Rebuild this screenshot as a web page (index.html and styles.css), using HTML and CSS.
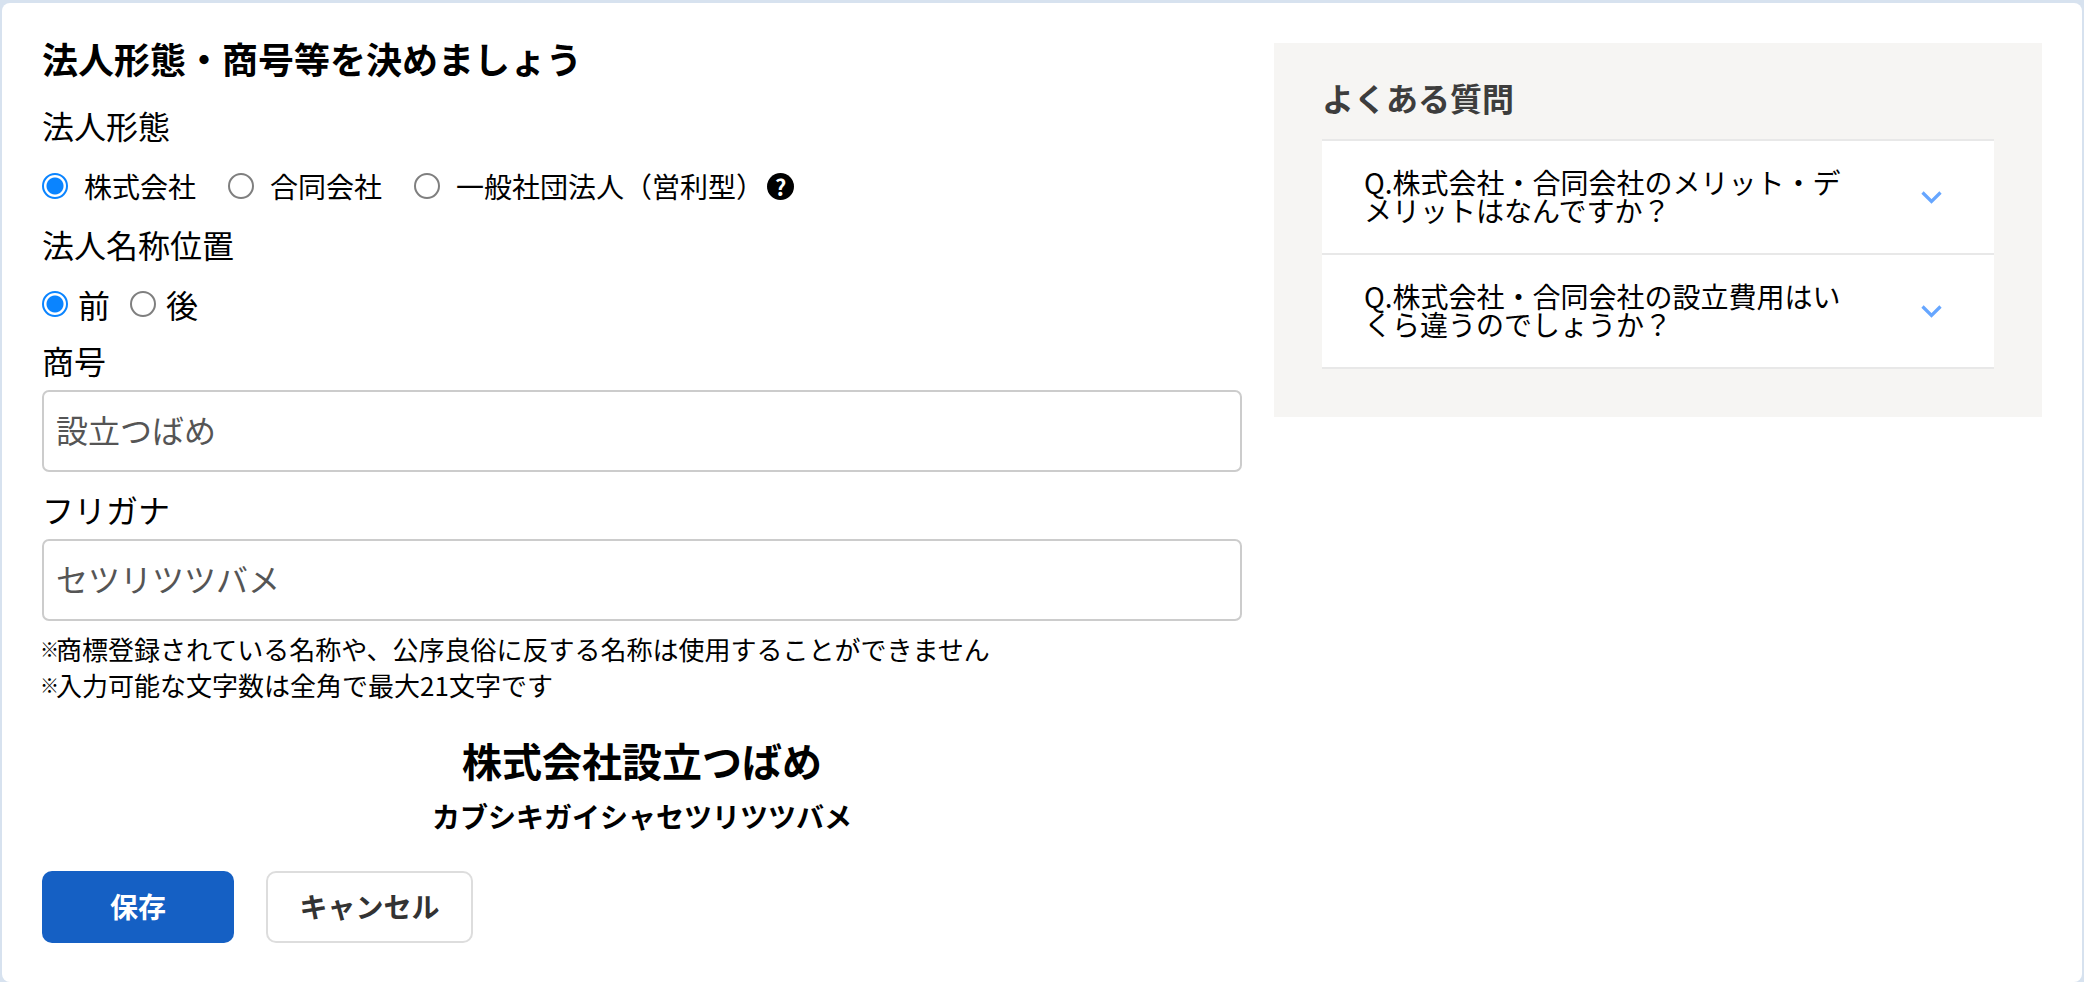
FILE: index.html
```html
<!DOCTYPE html>
<html lang="ja">
<head>
<meta charset="utf-8">
<title>法人形態・商号等を決めましょう</title>
<link rel="stylesheet" href="styles.css">
</head>
<body>
<main class="card">
  <form class="form">
    <h1 class="title">法人形態・商号等を決めましょう</h1>
    <p class="label label-type">法人形態</p>
    <div class="radios radios-type">
      <label class="radio"><input type="radio" name="type" checked><span>株式会社</span></label>
      <label class="radio"><input type="radio" name="type"><span>合同会社</span></label>
      <label class="radio"><input type="radio" name="type"><span>一般社団法人（営利型）</span></label>
      <span class="help">?</span>
    </div>
    <p class="label label-pos">法人名称位置</p>
    <div class="radios radios-pos">
      <label class="radio"><input type="radio" name="pos" checked><span>前</span></label>
      <label class="radio"><input type="radio" name="pos"><span>後</span></label>
    </div>
    <p class="label label-name">商号</p>
    <input class="field" type="text" value="設立つばめ">
    <p class="label label-kana">フリガナ</p>
    <input class="field" type="text" value="セツリツツバメ">
    <p class="note note-first"><span class="mark">※</span>商標登録されている名称や、公序良俗に反する名称は使用することができません</p>
    <p class="note"><span class="mark">※</span>入力可能な文字数は全角で最大21文字です</p>
    <p class="result">株式会社設立つばめ</p>
    <p class="result-kana">カブシキガイシャセツリツツバメ</p>
    <div class="actions">
      <button class="btn btn-save" type="button">保存</button>
      <button class="btn btn-cancel" type="button">キャンセル</button>
    </div>
  </form>
  <aside class="faq">
    <h2 class="faq-title">よくある質問</h2>
    <ul class="faq-list">
      <li class="faq-item">
        <span class="faq-q">Q.株式会社・合同会社のメリット・デメリットはなんですか？</span>
        <svg class="chev" viewBox="0 0 21 13" aria-hidden="true"><path d="M1.5 1.5 10.5 10.5 19.5 1.5"/></svg>
      </li>
      <li class="faq-item">
        <span class="faq-q">Q.株式会社・合同会社の設立費用はいくら違うのでしょうか？</span>
        <svg class="chev" viewBox="0 0 21 13" aria-hidden="true"><path d="M1.5 1.5 10.5 10.5 19.5 1.5"/></svg>
      </li>
    </ul>
  </aside>
</main>
</body>
</html>
```
FILE: styles.css
```css
* { box-sizing: border-box; }
html, body { margin: 0; height: 100%; }
body {
  background: #d7e2ef;
  padding: 3px 2px 0;
  font-family: "Noto Sans CJK JP", "Liberation Sans", sans-serif;
  color: #000;
  overflow: hidden;
}
.card {
  background: #fff;
  border-radius: 8px;
  height: 979px;
  padding: 40px 40px 0;
  display: flex;
  align-items: flex-start;
  gap: 32px;
}
.form { width: 1200px; flex: none; margin-top: -3px; }
p, h1, h2, ul { margin: 0; padding: 0; }
.title { font-size: 36px; line-height: 36px; font-weight: 700; }
.label { font-size: 32px; line-height: 40px; }
.label-type { margin-top: 29px; }
.label-pos { margin-top: 18px; }
.label-name { margin-top: 16px; }
.label-kana { margin-top: 17px; }
.radios { display: flex; align-items: center; }
.radios-type { margin-top: 21px; height: 40px; font-size: 28px; gap: 32px; }
.radios-pos { margin-top: 20px; height: 40px; font-size: 32px; gap: 20px; }
.radio { display: flex; align-items: center; }
.radio input {
  appearance: none;
  margin: 0;
  width: 26px;
  height: 26px;
  border-radius: 50%;
  border: 2px solid #7f7f7f;
  background: #fff;
  flex: none;
}
.radio input:checked {
  border-color: #0a84ff;
  background: radial-gradient(circle, #0a84ff 0 8px, #fff 9px);
}
.radios-type .radio { gap: 16px; }
.radios-pos .radio { gap: 10px; }
.help {
  width: 27px;
  height: 27px;
  margin: 0 0 0 -29px;
  border-radius: 50%;
  background: #000;
  color: #fff;
  font-size: 22px;
  font-weight: 700;
  line-height: 27px;
  text-align: center;
}
.field {
  display: block;
  width: 100%;
  height: 82px;
  margin-top: 10px;
  padding: 0 12px 4px;
  border: 2px solid #ccc;
  border-radius: 7px;
  background: #fff;
  color: #555;
  font: inherit;
  font-size: 32px;
}
.note { font-size: 26px; line-height: 36px; }
.mark {
  font-size: 19px;
  font-weight: 700;
  line-height: 0;
  vertical-align: 3px;
  letter-spacing: -3px;
  margin-left: -2px;
}
.note-first { margin-top: 10px; }
.result { margin-top: 29px; text-align: center; font-size: 40px; line-height: 56px; font-weight: 700; }
.result-kana { margin-top: 8px; text-align: center; font-size: 28px; line-height: 40px; font-weight: 700; }
.actions { display: flex; gap: 32px; margin-top: 35px; }
.btn {
  height: 72px;
  border-radius: 10px;
  font: inherit;
  font-size: 28px;
  font-weight: 700;
  padding: 0 0 2px;
}
.btn-save { width: 192px; background: #1560c4; color: #fff; border: 0; }
.btn-cancel { width: 207px; background: #fff; color: #333; border: 2px solid #ddd; }
.faq {
  width: 768px;
  flex: none;
  height: 374px;
  background: #f6f5f3;
  padding: 34px 48px 0;
}
.faq-title { font-size: 32px; line-height: 40px; font-weight: 700; color: #3d3d3d; }
.faq-list { list-style: none; margin-top: 22px; border-top: 2px solid #e8e8e8; }
.faq-item {
  display: flex;
  align-items: center;
  height: 114px;
  padding: 0 52px 2px 42px;
  background: #fff;
  border-bottom: 2px solid #e8e8e8;
}
.faq-q { width: 490px; font-size: 28px; line-height: 28px; flex: none; }
.chev { width: 21px; height: 13px; margin: 2px 0 0 auto; }
.chev path { fill: none; stroke: #66a6ff; stroke-width: 3.2; }
```
